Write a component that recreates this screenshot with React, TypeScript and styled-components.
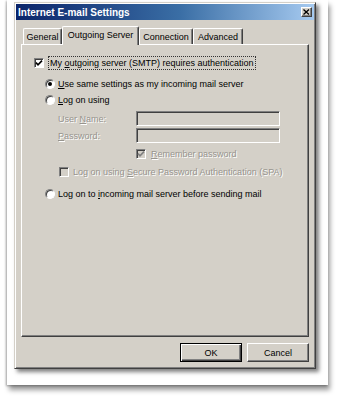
import React from "react";
import styled, { createGlobalStyle } from "styled-components";

const face = "#d4d0c8";
const shadow = "#808080";
const dark = "#404040";

const GlobalStyle = createGlobalStyle`
  html, body { margin: 0; background: #fff; }
  body {
    font-family: "Liberation Sans", Arial, sans-serif;
    font-size: 9px;
    color: #000;
  }
`;

const Page = styled.div`
  width: 337px;
  height: 400px;
  overflow: hidden;
  padding-left: 7px;
  box-sizing: border-box;
`;

const Paper = styled.div`
  width: 321px;
  height: 385px;
  background: #fff;
  box-sizing: border-box;
  padding: 2px 0 0 7px;
  box-shadow: -1px 1px 2px rgba(0, 0, 0, 0.3), 2px 5px 5px rgba(0, 0, 0, 0.4);
`;

const Dialog = styled.div`
  width: 302px;
  height: 367px;
  box-sizing: border-box;
  padding: 1px;
  display: flex;
  flex-direction: column;
  background: ${face};
  border: 1px solid;
  border-color: ${face} ${dark} ${dark} ${face};
  box-shadow: inset 1px 1px 0 #fff, inset -1px -1px 0 ${shadow},
    3px 3px 4px rgba(0, 0, 0, 0.5);
`;

const TitleBar = styled.div`
  height: 16px;
  display: flex;
  align-items: center;
  justify-content: space-between;
  padding: 0 2px 0 2px;
  background: linear-gradient(to right, #0a246a, #3a6ea5 55%, #a6caf0);
`;

const Title = styled.span`
  color: #fff;
  font-weight: bold;
  font-size: 10px;
  letter-spacing: 0;
`;

const CloseButton = styled.div`
  width: 11px;
  height: 10px;
  box-sizing: border-box;
  display: flex;
  align-items: center;
  justify-content: center;
  background: ${face};
  border: 1px solid;
  border-color: #fff ${dark} ${dark} #fff;
  box-shadow: inset -1px -1px 0 ${shadow};
`;

const Body = styled.div`
  flex: 1;
  display: flex;
  flex-direction: column;
  padding: 6px 5px 5px 5px;
`;

const TabStrip = styled.div`
  height: 18px;
  display: flex;
  align-items: flex-end;
  padding-left: 2px;
`;

const Tab = styled.div<{ $active?: boolean; $w: number }>`
  width: ${(p) => p.$w}px;
  height: ${(p) => (p.$active ? 19 : 16)}px;
  margin-bottom: ${(p) => (p.$active ? -1 : 0)}px;
  position: relative;
  z-index: ${(p) => (p.$active ? 1 : 0)};
  box-sizing: border-box;
  display: flex;
  align-items: center;
  justify-content: center;
  padding-bottom: ${(p) => (p.$active ? 2 : 0)}px;
  background: ${face};
  border-top: 1px solid #fff;
  border-left: 1px solid #fff;
  border-right: 1px solid ${dark};
  border-radius: 2px 2px 0 0;
  box-shadow: inset -1px 0 0 ${shadow};
`;

const Panel = styled.div`
  height: 293px;
  box-sizing: border-box;
  display: flex;
  flex-direction: column;
  border: 1px solid;
  border-color: #fff ${dark} ${dark} #fff;
  box-shadow: inset -1px -1px 0 ${shadow};
`;

const Row = styled.div<{ $mt: number; $ml: number; $h?: number }>`
  display: flex;
  align-items: center;
  height: ${(p) => p.$h ?? 16}px;
  margin-top: ${(p) => p.$mt}px;
  padding-left: ${(p) => p.$ml}px;
`;

const Box = styled.div<{ $disabled?: boolean }>`
  width: 10px;
  height: 10px;
  box-sizing: border-box;
  flex: none;
  display: flex;
  align-items: center;
  justify-content: center;
  background: ${(p) => (p.$disabled ? face : "#fff")};
  border: 1px solid;
  border-color: ${shadow} #fff #fff ${shadow};
  box-shadow: inset 1px 1px 0 ${dark};
`;

const Radio = styled.div<{ $on?: boolean }>`
  width: 10px;
  height: 10px;
  box-sizing: border-box;
  flex: none;
  border-radius: 50%;
  background: #fff;
  border: 1px solid;
  border-color: ${shadow} #fff #fff ${shadow};
  box-shadow: inset 1px 1px 0 ${dark};
  display: flex;
  align-items: center;
  justify-content: center;
  &::after {
    content: "";
    display: ${(p) => (p.$on ? "block" : "none")};
    width: 4px;
    height: 4px;
    border-radius: 50%;
    background: #000;
  }
`;

const Label = styled.span<{ $gap?: number; $disabled?: boolean }>`
  margin-left: ${(p) => p.$gap ?? 3}px;
  white-space: nowrap;
  color: ${(p) => (p.$disabled ? "#97948e" : "#000")};
  text-shadow: ${(p) => (p.$disabled ? "1px 1px 0 #fff" : "none")};
`;

const FocusLabel = styled.span`
  margin-left: 4px;
  height: 14px;
  line-height: 12px;
  box-sizing: border-box;
  padding: 0 1px;
  border: 1px dotted #333;
  white-space: nowrap;
`;

const FieldLabel = styled.span`
  width: 78px;
  flex: none;
  color: #97948e;
  text-shadow: 1px 1px 0 #fff;
`;

const TextBox = styled.div`
  width: 144px;
  height: 15px;
  box-sizing: border-box;
  background: ${face};
  border: 1px solid;
  border-color: ${shadow} #fff #fff ${shadow};
  box-shadow: inset 1px 1px 0 ${dark};
`;

const Key = styled.u`
  text-decoration: underline;
  text-underline-offset: 1px;
`;

const ButtonRow = styled.div`
  display: flex;
  justify-content: flex-end;
  gap: 5px;
  margin-top: 6px;
`;

const Button = styled.div<{ $default?: boolean }>`
  width: 62px;
  height: 19px;
  box-sizing: border-box;
  display: flex;
  align-items: center;
  justify-content: center;
  background: ${face};
  border: 1px solid;
  border-color: ${(p) => (p.$default ? "#000" : `#fff ${dark} ${dark} #fff`)};
  box-shadow: ${(p) =>
    p.$default
      ? `inset 1px 1px 0 #fff, inset -1px -1px 0 ${dark}, inset -2px -2px 0 ${shadow}`
      : `inset -1px -1px 0 ${shadow}`};
`;

function Check({ on, disabled }: { on?: boolean; disabled?: boolean }) {
  return (
    <Box $disabled={disabled}>
      {on && (
        <svg width="8" height="8" viewBox="0 0 8 8">
          <path
            d="M1 3.6 L3 5.8 L7 1.6"
            fill="none"
            stroke={disabled ? shadow : "#000"}
            strokeWidth="1.6"
          />
        </svg>
      )}
    </Box>
  );
}

export default function App() {
  return (
    <Page>
      <GlobalStyle />
      <Paper>
        <Dialog>
          <TitleBar>
            <Title>Internet E-mail Settings</Title>
            <CloseButton>
              <svg width="7" height="6" viewBox="0 0 7 6">
                <path d="M0.5 0.5 L6 5.5 M6 0.5 L0.5 5.5" stroke="#000" strokeWidth="1.3" />
              </svg>
            </CloseButton>
          </TitleBar>
          <Body>
            <TabStrip>
              <Tab $w={39}>General</Tab>
              <Tab $w={77} $active>
                Outgoing Server
              </Tab>
              <Tab $w={54}>Connection</Tab>
              <Tab $w={50}>Advanced</Tab>
            </TabStrip>
            <Panel>
              <Row $mt={10} $ml={12}>
                <Check on />
                <FocusLabel>
                  My <Key>o</Key>utgoing server (SMTP) requires authentication
                </FocusLabel>
              </Row>
              <Row $mt={5} $ml={23}>
                <Radio $on />
                <Label>
                  <Key>U</Key>se same settings as my incoming mail server
                </Label>
              </Row>
              <Row $mt={0} $ml={23}>
                <Radio />
                <Label>
                  <Key>L</Key>og on using
                </Label>
              </Row>
              <Row $mt={3} $ml={36} $h={15}>
                <FieldLabel>
                  User <Key>N</Key>ame:
                </FieldLabel>
                <TextBox />
              </Row>
              <Row $mt={2} $ml={36} $h={15}>
                <FieldLabel>
                  <Key>P</Key>assword:
                </FieldLabel>
                <TextBox />
              </Row>
              <Row $mt={3} $ml={114}>
                <Check on disabled />
                <Label $gap={5} $disabled>
                  <Key>R</Key>emember password
                </Label>
              </Row>
              <Row $mt={2} $ml={37}>
                <Check disabled />
                <Label $gap={4} $disabled>
                  Log on using <Key>S</Key>ecure Password Authentication (SPA)
                </Label>
              </Row>
              <Row $mt={6} $ml={23}>
                <Radio />
                <Label>
                  Log on to <Key>i</Key>ncoming mail server before sending mail
                </Label>
              </Row>
            </Panel>
            <ButtonRow>
              <Button $default>OK</Button>
              <Button>Cancel</Button>
            </ButtonRow>
          </Body>
        </Dialog>
      </Paper>
    </Page>
  );
}
